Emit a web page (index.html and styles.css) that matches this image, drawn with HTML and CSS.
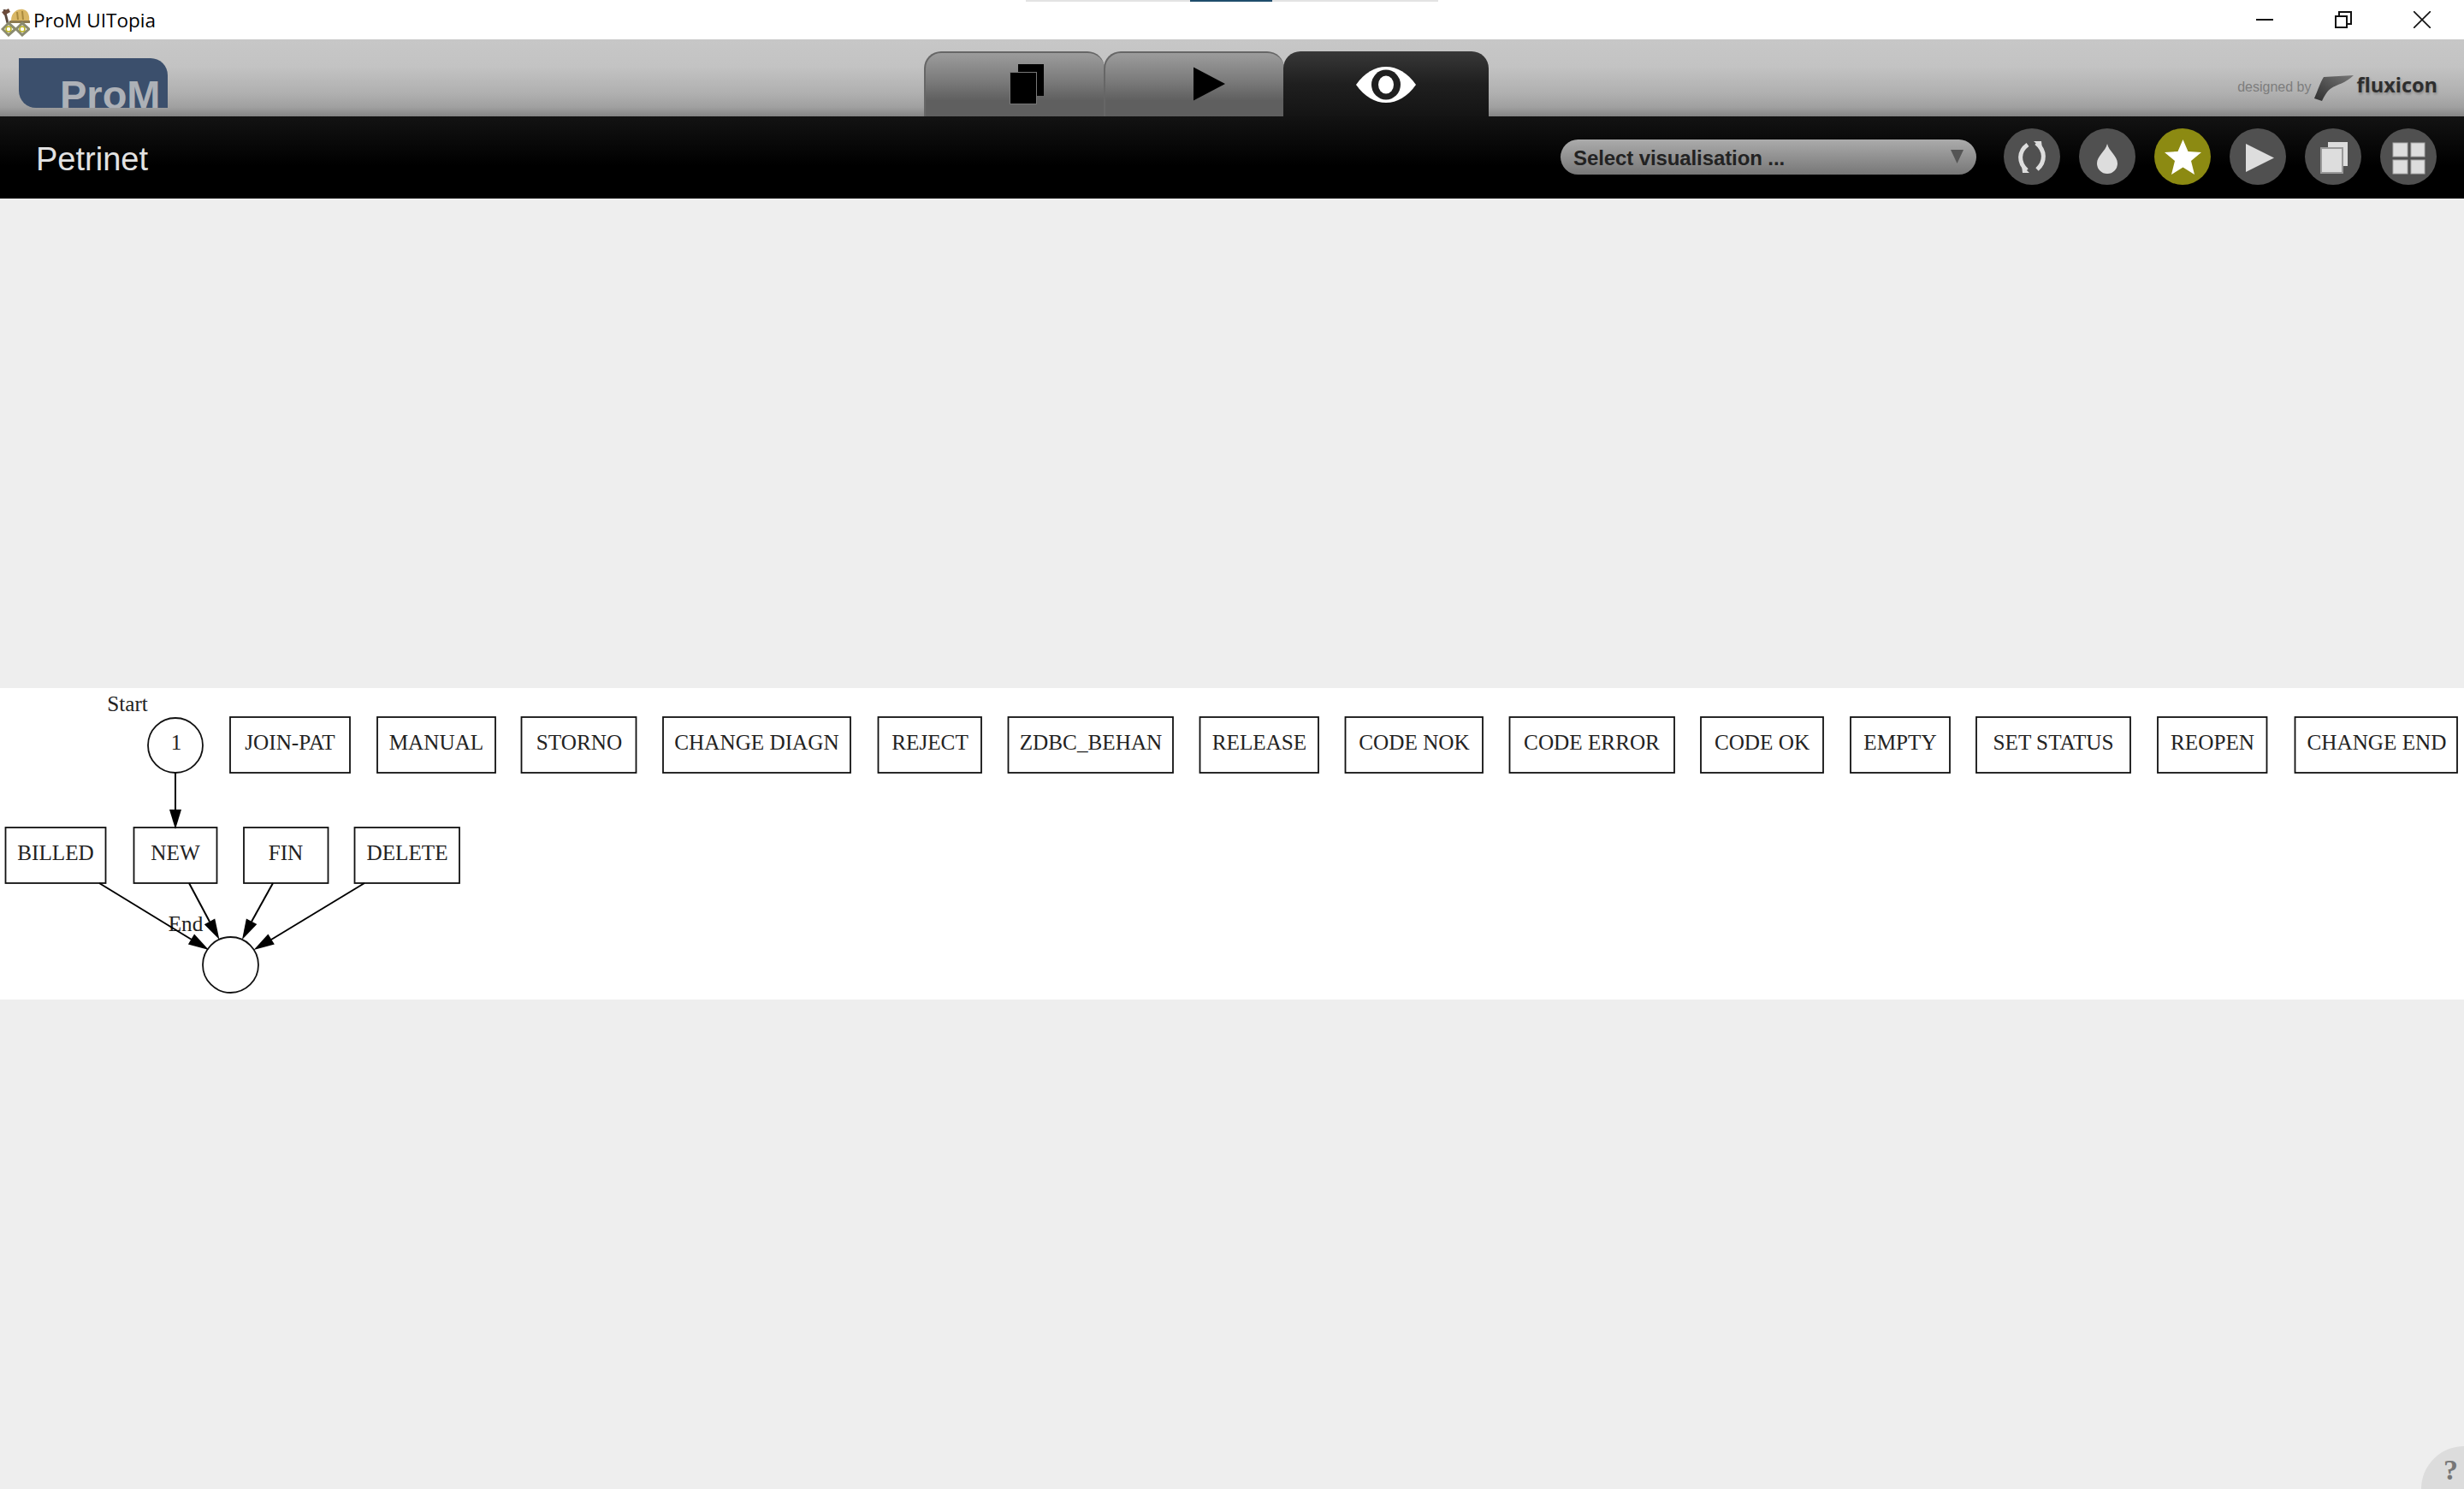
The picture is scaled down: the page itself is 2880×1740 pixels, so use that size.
FILE: index.html
```html
<!DOCTYPE html>
<html lang="en">
<head>
    <meta charset="UTF-8">
    <title>ProM UITopia</title>
    <link rel="stylesheet" href="styles.css">
</head>
<body>
    <div class="load-strip"><div class="load-done"></div></div>

    <div class="titlebar">
        <svg class="app-icon" viewBox="0 0 34 34">
            <path d="M4 2 L8 18" stroke="#5a4a40" stroke-width="3" fill="none"/>
            <path d="M1 5 L9 1 L11 5 L4 9 Z" fill="#6b4a3a"/>
            <path d="M12 15 C12 5 20 1 26 2 C32 3 34 10 33 16 Z" fill="#d9b765"/>
            <path d="M19 5 L20 14 M25 4 L26 14" stroke="#a98a3e" stroke-width="2" fill="none"/>
            <rect x="10" y="15" width="24" height="3" fill="#8c7a50"/>
            <path d="M9 18 L17 25 L9 32 L2 25 Z" fill="none" stroke="#8a8a70" stroke-width="3"/>
            <path d="M25 18 L33 25 L25 32 L18 25 Z" fill="none" stroke="#8a8a70" stroke-width="3"/>
            <circle cx="9" cy="25" r="3" fill="#fff" stroke="#b8b020" stroke-width="1.5"/>
            <circle cx="25" cy="25" r="3" fill="#fff" stroke="#b8b020" stroke-width="1.5"/>
        </svg>
        <span class="app-name">ProM UITopia</span>
        <div class="win-controls">
            <svg class="win-btn" viewBox="0 0 20 20"><path d="M0 10 H20" stroke="#111" stroke-width="2"/></svg>
            <svg class="win-btn" viewBox="0 0 20 20"><path d="M1 6 H14 V19 H1 Z M5 6 V1 H19 V15 H14" fill="none" stroke="#111" stroke-width="2"/></svg>
            <svg class="win-btn" viewBox="0 0 20 20"><path d="M0 0 L20 20 M20 0 L0 20" stroke="#111" stroke-width="1.6"/></svg>
        </div>
    </div>

    <div class="toolbar">
        <div class="logo-cell">
            <div class="logo"><span class="logo-text">ProM</span></div>
        </div>
        <div class="tabs">
            <div class="tab tab-files">
                <svg class="tab-icon" viewBox="0 0 40 48">
                    <rect x="10" y="1" width="30" height="37" fill="#000"/>
                    <rect x="0.5" y="10.5" width="31" height="37" fill="#000" stroke="#777"/>
                </svg>
            </div>
            <div class="tab tab-run">
                <svg class="tab-icon" viewBox="0 0 40 40"><path d="M1 0 L39 20 L1 40 Z" fill="#000"/></svg>
            </div>
            <div class="tab tab-active">
                <svg class="tab-icon" viewBox="0 0 70 42">
                    <path d="M0 21 C10 7 22 0 35 0 C48 0 60 7 70 21 C60 35 48 42 35 42 C22 42 10 35 0 21 Z" fill="#fff"/>
                    <ellipse cx="35" cy="21" rx="17" ry="17.500" fill="#1f1f1f"/>
                    <ellipse cx="35" cy="21" rx="9" ry="10.500" fill="#fff"/>
                </svg>
            </div>
        </div>
        <div class="designed">
            <span class="designed-by">designed by</span>
            <svg class="flux-mark" viewBox="0 0 48 30">
                <defs>
                    <linearGradient id="fluxFill" x1="1" y1="0" x2="0" y2="1">
                        <stop offset="0" stop-color="#777"/>
                        <stop offset="1" stop-color="#2e2e2e"/>
                    </linearGradient>
                </defs>
                <path d="M47 0 L12 2 C8 8 5 18 1 27 L10 30 C13 24 16 18 21 15 C27 11 38 9 47 0 Z" fill="url(#fluxFill)"/>
            </svg>
            <span class="flux-name">fluxicon</span>
        </div>
    </div>

    <div class="viewbar">
        <div class="view-title">Petrinet</div>
        <div class="vis-select">
            <span class="vis-label">Select visualisation ...</span>
            <svg class="vis-arrow" viewBox="0 0 15 16"><path d="M0 0 H15 L7.5 16 Z" fill="#555"/></svg>
        </div>
        <div class="view-buttons">
            <div class="round-btn">
                <svg viewBox="0 0 66 66">
                    <path d="M28 19 C17 27 17 40 27 49" fill="none" stroke="#ddd" stroke-width="5"/>
                    <path d="M38 17 C49 26 49 39 39 48" fill="none" stroke="#ddd" stroke-width="5"/>
                    <path d="M21 43 L30 52 L22 52 Z M45 24 L35 15 L44 15 Z" fill="#ddd"/>
                </svg>
            </div>
            <div class="round-btn">
                <svg viewBox="0 0 66 66">
                    <path d="M33 18 C35 27 45 32 45 41 A12 12 0 0 1 21 41 C21 32 31 27 33 18 Z" fill="#ddd"/>
                </svg>
            </div>
            <div class="round-btn round-btn-on">
                <svg viewBox="0 0 66 66">
                    <path d="M33.500 13 L39.500 27 L55 28 L43 38 L47 54 L33.500 45.500 L20 54 L24 38 L12 28 L27.500 27 Z" fill="#fff"/>
                </svg>
            </div>
            <div class="round-btn">
                <svg viewBox="0 0 66 66"><path d="M19 18 L52 34.500 L19 51 Z" fill="#ddd"/></svg>
            </div>
            <div class="round-btn">
                <svg viewBox="0 0 66 66">
                    <rect x="27" y="16" width="23" height="28" fill="#ddd"/>
                    <rect x="19" y="23" width="25" height="29" fill="#ddd" stroke="#999" stroke-width="2"/>
                </svg>
            </div>
            <div class="round-btn">
                <svg viewBox="0 0 66 66">
                    <rect x="15" y="17" width="17" height="16" fill="#ddd" stroke="#aaa"/>
                    <rect x="36" y="17" width="16" height="16" fill="#ddd" stroke="#aaa"/>
                    <rect x="15" y="37" width="17" height="16" fill="#ddd" stroke="#aaa"/>
                    <rect x="36" y="37" width="16" height="16" fill="#ddd" stroke="#aaa"/>
                </svg>
            </div>
        </div>
    </div>

    <div class="canvas">
        <div class="graph-band">
            <!-- y values are page coordinates, hence the viewBox offset -->
            <svg class="graph" viewBox="0 804 2880 364">
                <text class="graph-label" x="149" y="831">Start</text>
                <circle class="node" cx="205" cy="871" r="32"/>
                <text class="graph-label" x="206" y="876">1</text>

                <rect class="node" x="269" y="838" width="140" height="65"/><text class="graph-label" x="339" y="876">JOIN-PAT</text>
                <rect class="node" x="441" y="838" width="138" height="65"/><text class="graph-label" x="510" y="876">MANUAL</text>
                <rect class="node" x="609.500" y="838" width="134" height="65"/><text class="graph-label" x="677" y="876">STORNO</text>
                <rect class="node" x="775" y="838" width="219" height="65"/><text class="graph-label" x="884.500" y="876">CHANGE DIAGN</text>
                <rect class="node" x="1026.500" y="838" width="120.500" height="65"/><text class="graph-label" x="1087" y="876">REJECT</text>
                <rect class="node" x="1178.500" y="838" width="192.500" height="65"/><text class="graph-label" x="1275" y="876">ZDBC_BEHAN</text>
                <rect class="node" x="1402.500" y="838" width="138.500" height="65"/><text class="graph-label" x="1472" y="876">RELEASE</text>
                <rect class="node" x="1572.500" y="838" width="160.500" height="65"/><text class="graph-label" x="1653" y="876">CODE NOK</text>
                <rect class="node" x="1764.500" y="838" width="192.500" height="65"/><text class="graph-label" x="1860.500" y="876">CODE ERROR</text>
                <rect class="node" x="1988" y="838" width="143" height="65"/><text class="graph-label" x="2059.500" y="876">CODE OK</text>
                <rect class="node" x="2163" y="838" width="116" height="65"/><text class="graph-label" x="2221" y="876">EMPTY</text>
                <rect class="node" x="2310" y="838" width="180" height="65"/><text class="graph-label" x="2400" y="876">SET STATUS</text>
                <rect class="node" x="2522" y="838" width="127.500" height="65"/><text class="graph-label" x="2586" y="876">REOPEN</text>
                <rect class="node" x="2682.500" y="838" width="189.500" height="65"/><text class="graph-label" x="2778" y="876">CHANGE END</text>

                <rect class="node" x="6.500" y="967" width="117" height="65"/><text class="graph-label" x="65" y="1005">BILLED</text>
                <rect class="node" x="156.500" y="967" width="97" height="65"/><text class="graph-label" x="205" y="1005">NEW</text>
                <rect class="node" x="285" y="967" width="98.500" height="65"/><text class="graph-label" x="334" y="1005">FIN</text>
                <rect class="node" x="414.500" y="967" width="122.500" height="65"/><text class="graph-label" x="476" y="1005">DELETE</text>

                <circle class="node" cx="269.500" cy="1127.500" r="32.500"/>
                <text class="graph-label" x="217" y="1088">End</text>

                <path class="edge" d="M205 903 V948"/>
                <path class="arrow" d="M198 946 H212 L205 969 Z"/>
                <path class="edge" d="M116 1032 L224 1098"/>
                <path class="arrow" d="M219.900 1103.500 L227.100 1091.500 L244 1110 Z"/>
                <path class="edge" d="M221 1032 L245 1077"/>
                <path class="arrow" d="M238.800 1080.200 L251.200 1073.600 L256.400 1098 Z"/>
                <path class="edge" d="M319 1032 L294 1077"/>
                <path class="arrow" d="M300.300 1080 L287.900 1073.400 L283 1098 Z"/>
                <path class="edge" d="M426 1032 L317 1098"/>
                <path class="arrow" d="M320.800 1103.500 L313.400 1091.500 L296.600 1110 Z"/>
            </svg>
        </div>
        <div class="help">?</div>
    </div>
</body>
</html>
```

FILE: styles.css
```css
* {
    margin: 0;
    padding: 0;
    box-sizing: border-box;
}

body {
    font-family: 'Liberation Sans', Arial, sans-serif;
    width: 2880px;
    height: 1740px;
    overflow: hidden;
    display: flex;
    flex-direction: column;
    background: #eeeeee;
    position: relative;
}

/* thin loading strip on the very top edge */
.load-strip {
    position: absolute;
    top: 0;
    left: 1199px;
    width: 482px;
    height: 2px;
    background: #e3e3e3;
}

.load-done {
    margin-left: 192px;
    width: 96px;
    height: 2px;
    background: #1f4d6b;
}

.titlebar {
    height: 46px;
    background: #fff;
    display: flex;
    align-items: center;
    padding-left: 1px;
}

.app-icon {
    width: 34px;
    height: 34px;
    margin-top: 6px;
}

.app-name {
    font-family: 'Open Sans', sans-serif;
    font-size: 22.5px;
    color: #000;
    margin-left: 4px;
}

.win-controls {
    margin-left: auto;
    display: flex;
    gap: 72px;
    padding-right: 39px;
}

.win-btn {
    width: 20px;
    height: 20px;
}

.toolbar {
    height: 90px;
    display: grid;
    grid-template-columns: 1080px 660px 1fr;
    background: linear-gradient(180deg, #c7c7c7 0%, #c3c3c3 35%, #b0b0b0 70%, #a0a0a0 88%, #858585 100%);
}

.logo-cell {
    padding: 22px 0 0 22px;
}

.logo {
    width: 174px;
    height: 58px;
    background: #3b4f6c;
    border-radius: 0 20px 0 20px;
    overflow: hidden;
    padding: 19px 0 0 48px;
}

.logo-text {
    display: block;
    font-size: 47px;
    line-height: 47px;
    font-weight: bold;
    color: #adb1b7;
}

.tabs {
    display: flex;
    align-items: flex-end;
}

.tab {
    width: 211px;
    height: 76px;
    margin-right: -1px;
    border: 2px solid #666;
    border-bottom: none;
    border-right: none;
    border-radius: 20px 20px 0 0;
    background: linear-gradient(180deg, #9c9c9c 0%, #7a7a7a 45%, #5f5f5f 75%, #5f5f5f 100%);
    display: flex;
}

.tab-files .tab-icon {
    width: 40px;
    height: 48px;
    margin: 12px 0 0 98px;
}

.tab-run .tab-icon {
    width: 39px;
    height: 40px;
    margin: 16px 0 0 102px;
}

.tab-active {
    width: 240px;
    margin-right: 0;
    border: none;
    justify-content: center;
    background: linear-gradient(180deg, #383838 0%, #1f1f1f 50%, #141414 100%);
}

.tab-active .tab-icon {
    width: 70px;
    height: 42px;
    margin-top: 18px;
}

.designed {
    display: flex;
    align-items: flex-start;
    justify-content: flex-end;
    padding: 42px 31px 0 0;
}

.designed-by {
    font-size: 16px;
    color: #7d7d7d;
    margin-top: 5px;
}

.flux-mark {
    width: 48px;
    height: 30px;
    margin: 0 2px 0 3px;
}

.flux-name {
    font-family: 'Open Sans', sans-serif;
    font-size: 23.5px;
    line-height: 26px;
    font-weight: 700;
    color: #2e2e2e;
    margin-top: -2px;
    text-shadow: 1px 2px 3px rgba(0, 0, 0, 0.25);
}

.viewbar {
    height: 96px;
    background: linear-gradient(180deg, #131313 0%, #000 60%);
    display: flex;
    align-items: center;
    padding: 0 32px 2px 42px;
}

.view-title {
    font-size: 38px;
    color: #e2e2e2;
    margin-top: 6px;
    margin-right: auto;
}

.vis-select {
    width: 486px;
    height: 41px;
    margin-right: 32px;
    padding: 0 15px 0 15px;
    border-radius: 21px;
    background: linear-gradient(180deg, #ababab 0%, #8c8c8c 60%, #777 100%);
    display: flex;
    align-items: center;
    justify-content: space-between;
    font-size: 24px;
    font-weight: bold;
    color: #222;
}

.vis-label {
    margin-top: 3px;
    letter-spacing: -0.1px;
}

.vis-arrow {
    width: 15px;
    height: 16px;
}

.view-buttons {
    display: flex;
    gap: 22px;
}

.round-btn {
    width: 66px;
    height: 66px;
    border-radius: 50%;
    background: #505050;
}

.round-btn svg {
    display: block;
    width: 66px;
    height: 66px;
}

.round-btn-on {
    background: #8c8a12;
}

.canvas {
    flex: 1;
    display: flex;
    align-items: center;
    position: relative;
}

.graph-band {
    width: 100%;
    height: 364px;
    background: #fff;
}

.graph {
    display: block;
    width: 2880px;
    height: 364px;
}

.node {
    fill: none;
    stroke: #111;
    stroke-width: 1.8;
}

.edge {
    fill: none;
    stroke: #000;
    stroke-width: 2;
}

.arrow {
    fill: #000;
}

.graph-label {
    font-family: 'Liberation Serif', 'Times New Roman', serif;
    font-size: 25.2px;
    text-anchor: middle;
    fill: #222;
}

.help {
    position: absolute;
    right: 0;
    bottom: 0;
    width: 50px;
    height: 50px;
    border-radius: 50px 0 0 0;
    background: #dcdcdc;
    color: #777;
    font-size: 34px;
    font-weight: bold;
    font-family: 'Liberation Serif', serif;
    text-align: right;
    padding: 11px 7px 0 0;
    line-height: 34px;
}
```
